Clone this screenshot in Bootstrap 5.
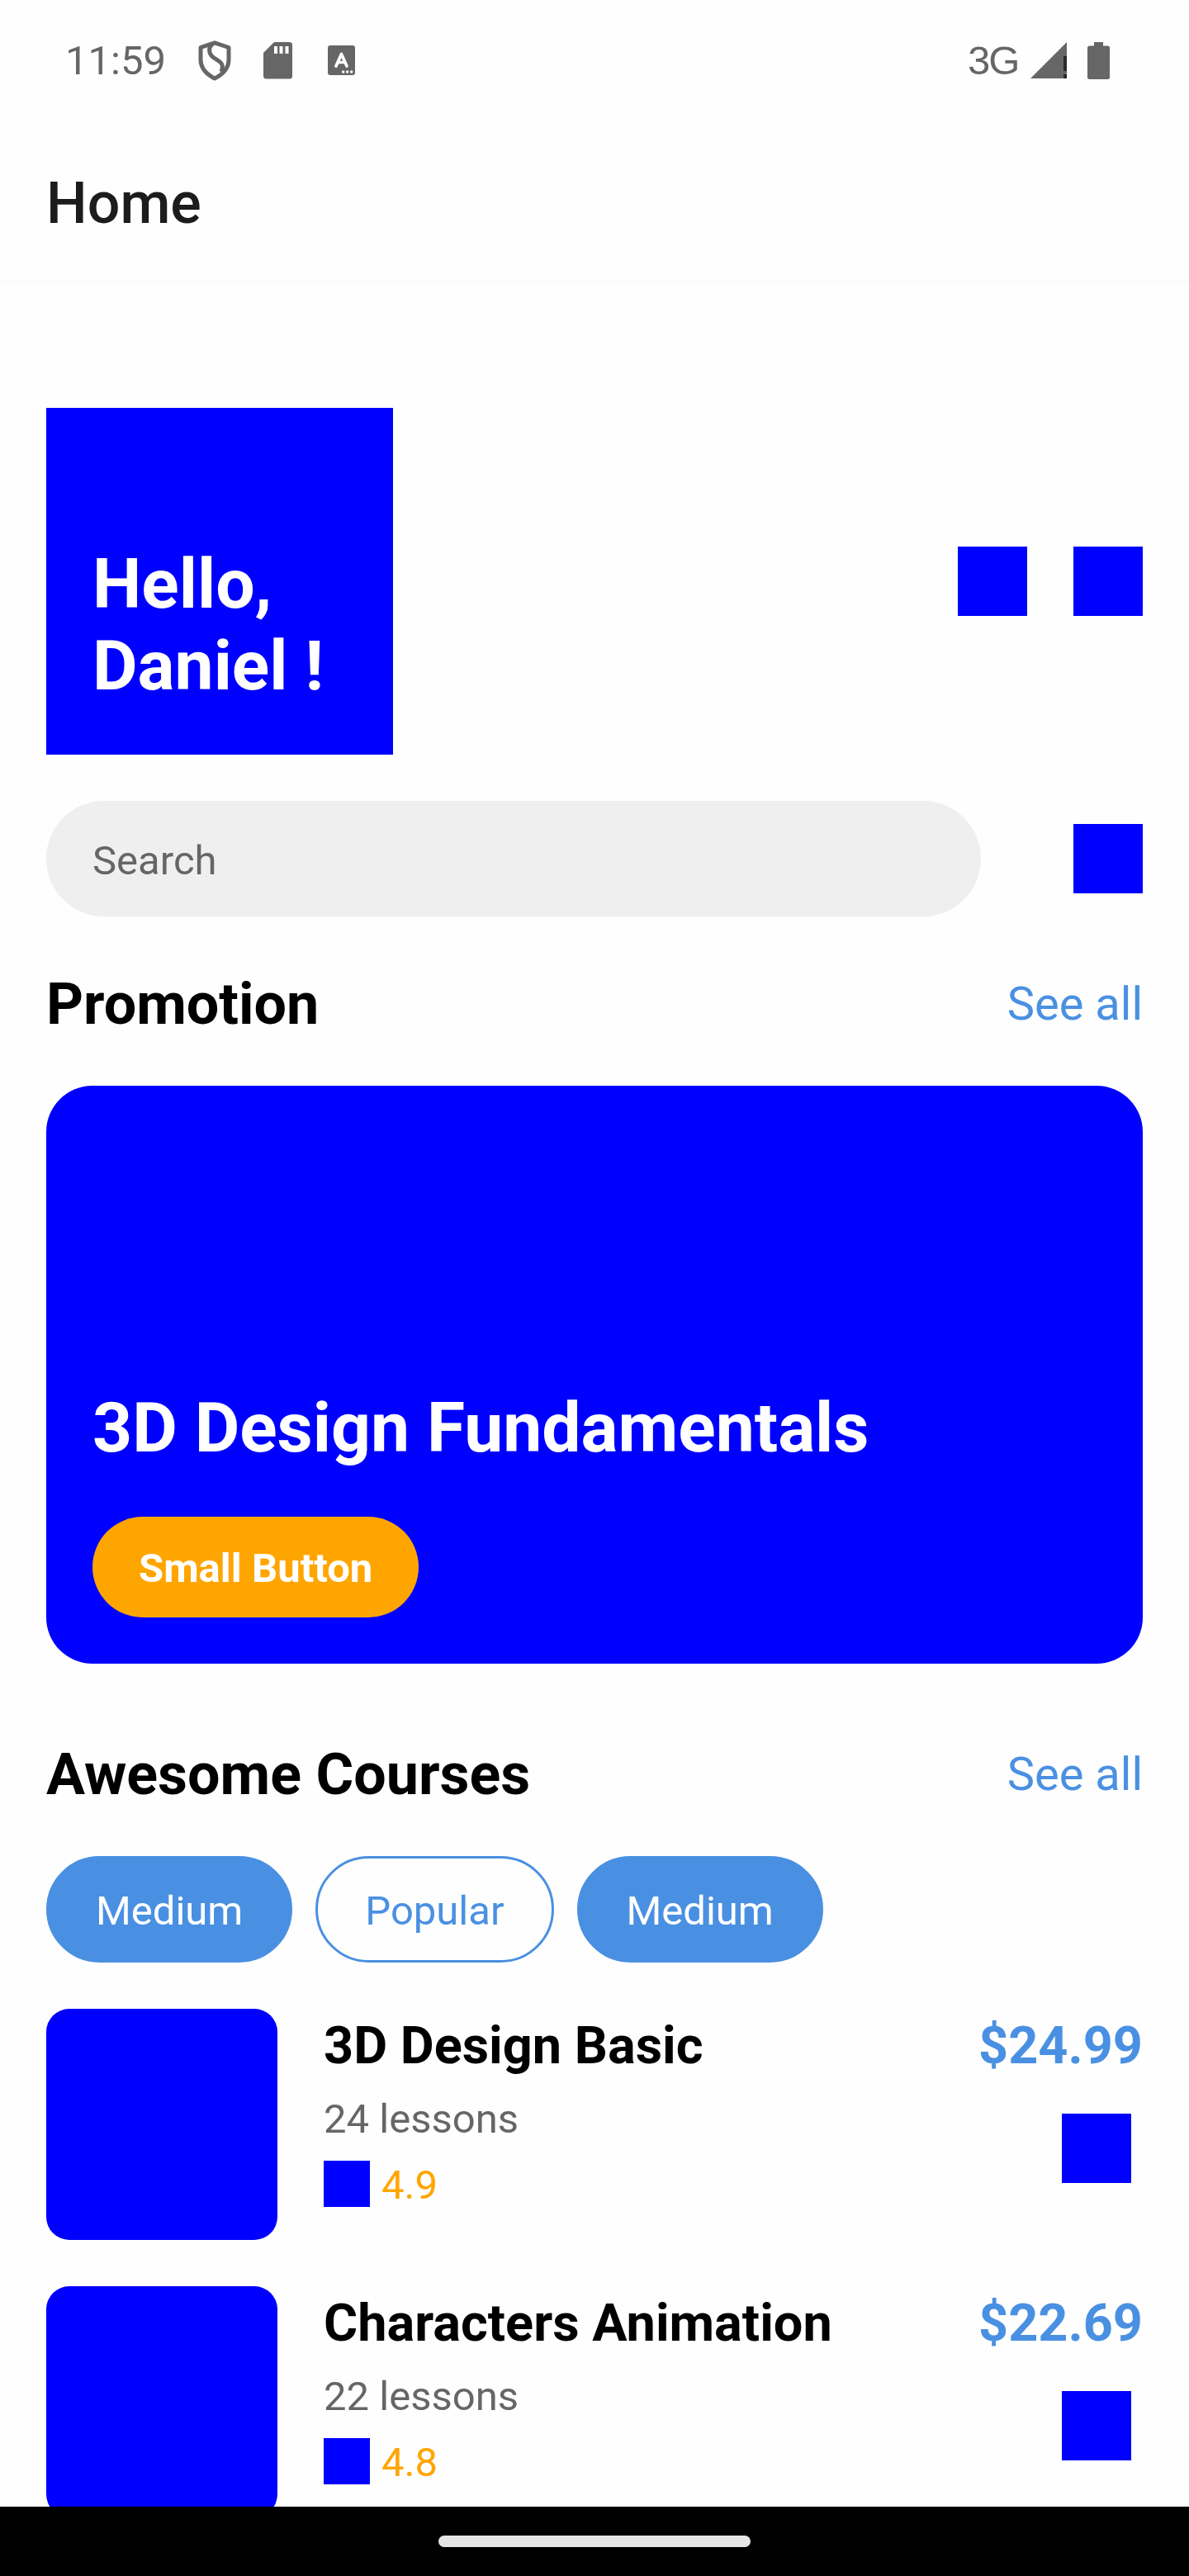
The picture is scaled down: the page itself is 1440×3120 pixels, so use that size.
<!DOCTYPE html>
<html lang="en">
<head>
<meta charset="utf-8">
<meta name="viewport" content="width=device-width, initial-scale=1">
<title>Home</title>
<link href="https://cdn.jsdelivr.net/npm/bootstrap@5.3.0/dist/css/bootstrap.min.css" rel="stylesheet">
<style>
body{font-family:Roboto,"Liberation Sans",sans-serif;background:#fefefe;color:#000;font-size:49px;line-height:58px}
.screen{width:1440px;height:3120px}
.status{height:146px;padding:0 96px 0 79px;color:#666;flex:none}
.status svg{display:block;flex:none}
.clock{width:161px;padding-top:2px}
.network{font-family:"Liberation Sans",sans-serif;font-size:49px;width:77px;letter-spacing:-2px;padding-left:1px}
.ic-sd{margin-left:39px}
.ic-a{margin-left:42px}
.ic-bat{margin-left:24px}
.appbar{height:194px;padding:2px 56px 0;flex:none}
.appbar h1{font-size:70px;line-height:82px;font-weight:500;color:#1c1c1e;margin-top:57px}
.feed{border-top:3px solid #fbfbfb;padding:151px 56px 0;min-height:0;flex:1 1 0}
.blue{background:#00f}
.hello{width:420px;height:420px;padding:56px;padding-bottom:58px;margin:0}
.big{font-size:84px;line-height:99px;font-weight:700;color:#fff}
.sq{width:84px;height:84px;flex:none}
.sq-sm{width:56px;height:56px;flex:none}
.gap-a{gap:56px}
.searchrow{margin-top:56px}
.search,.search:focus{width:1132px;height:140px;background:#efefef;padding:5px 56px 0;font-size:49px;line-height:58px;color:#666;border:0}
.search::placeholder{color:#666;opacity:1}
.head{height:82px;margin-bottom:58px}
.head-promo{margin-top:65px}
.head-courses{margin-top:93px}
.head h2{font-size:70px;line-height:82px;font-weight:700}
.head a{font-size:56px;line-height:66px}
.tint{color:#4a90e2}
.promo{height:700px;border-radius:56px;padding:56px}
.btn-small{background:#ffa500;color:#fff;font-weight:700;font-size:49px;line-height:58px;height:122px;padding:34px 56px 30px;border:0;margin-top:58px}
.chips{gap:28px;margin-bottom:56px}
.chip{font-size:49px;line-height:58px;height:129px;padding:34.5px 57px 29.5px;border:3.5px solid #4a90e2;color:#4a90e2}
.chip.on,.chip.on:hover{background:#4a90e2;color:#fff;border-color:#4a90e2}
.course{margin-bottom:56px;height:280px}
.thumb{width:280px;height:280px;border-radius:28px;flex:none}
.course h3{font-size:63px;line-height:74px;font-weight:700;margin:8px 0 23px}
.muted{color:#666}
.rate{margin-top:18px;gap:14px;color:#ffa500}
.rate span{padding-top:4px}
.price{font-size:63px;line-height:74px;font-weight:700;margin:8px 0 45px}
.more{margin-right:14px}
.sysnav{height:84px;background:#000;flex:none}
.sysnav div{width:378px;height:14px;border-radius:7px;background:#e6e6e6}
</style>
</head>
<body>
<div class="screen d-flex flex-column overflow-hidden">
  <header class="status d-flex align-items-center">
    <span class="clock">11:59</span>
    <svg width="40" height="49" viewBox="0 0 40 49" fill="none" stroke="#666" stroke-width="5" stroke-linejoin="round"><path d="M20 2.800 37 8.500V23C37 33 30 41 20 46 10 41 3 33 3 23V8.500Z"/><path d="M18 4C12 8 12 16 19 21 27 26 32 28 28 38"/></svg>
    <svg class="ic-sd" width="36" height="45" viewBox="0 0 36 45"><path fill="#666" d="M13 0H31.500Q35 0 35 3.500V41Q35 44.500 31.500 44.500H3.500Q0 44.500 0 41V13Z"/><path fill="#fff" d="M13 5h4v9h-4zM19.500 5h4v9h-4zM26.500 5h4v9h-4z"/></svg>
    <svg class="ic-a" width="33" height="36" viewBox="0 0 33 36"><rect width="33" height="36" rx="3" fill="#666"/><path d="M10 25 16.500 10.500 23 25M12.500 20.500H20.500" fill="none" stroke="#fff" stroke-width="3.700" stroke-linecap="round" stroke-linejoin="round"/><g fill="#fff"><circle cx="18.700" cy="32" r="1.700"/><circle cx="23.700" cy="32" r="1.700"/><circle cx="28.700" cy="32" r="1.700"/></g></svg>
    <span class="network ms-auto">3G</span>
    <svg width="45" height="44" viewBox="0 0 45 44"><path fill="#666" d="M44 0V44H0Z"/><path fill="#292929" d="M40 17h4v18h-4zM40 39h4v5h-4z"/></svg>
    <svg class="ic-bat" width="27" height="45" viewBox="0 0 27 45"><path fill="#666" d="M8 0H19V4.500H24.500Q27 4.500 27 7V42.500Q27 45 24.500 45H2.500Q0 45 0 42.500V7Q0 4.500 2.500 4.500H8Z"/></svg>
  </header>
  <nav class="appbar"><h1>Home</h1></nav>
  <main class="feed overflow-hidden">
    <div class="d-flex align-items-center justify-content-between">
      <div class="hello blue big d-flex flex-column justify-content-end"><span>Hello,</span><span>Daniel !</span></div>
      <div class="d-flex gap-a"><div class="sq blue"></div><div class="sq blue"></div></div>
    </div>
    <div class="searchrow d-flex align-items-center justify-content-between">
      <input class="search form-control rounded-pill" type="text" placeholder="Search" aria-label="Search">
      <div class="sq blue"></div>
    </div>
    <div class="head head-promo d-flex align-items-center justify-content-between">
      <h2 class="m-0">Promotion</h2><a class="tint text-decoration-none" href="#">See all</a>
    </div>
    <section class="promo blue d-flex flex-column justify-content-end align-items-start">
      <div class="big">3D Design Fundamentals</div>
      <button class="btn btn-small rounded-pill">Small Button</button>
    </section>
    <div class="head head-courses d-flex align-items-center justify-content-between">
      <h2 class="m-0">Awesome Courses</h2><a class="tint text-decoration-none" href="#">See all</a>
    </div>
    <div class="chips d-flex">
      <button class="btn chip on rounded-pill">Medium</button>
      <button class="btn chip rounded-pill">Popular</button>
      <button class="btn chip on rounded-pill">Medium</button>
    </div>
    <article class="course d-flex gap-a">
      <div class="thumb blue"></div>
      <div class="flex-grow-1">
        <h3>3D Design Basic</h3>
        <div class="muted">24 lessons</div>
        <div class="rate d-flex align-items-center"><div class="sq-sm blue"></div><span>4.9</span></div>
      </div>
      <div class="d-flex flex-column align-items-end">
        <div class="price tint">$24.99</div>
        <div class="sq blue more"></div>
      </div>
    </article>
    <article class="course d-flex gap-a">
      <div class="thumb blue"></div>
      <div class="flex-grow-1">
        <h3>Characters Animation</h3>
        <div class="muted">22 lessons</div>
        <div class="rate d-flex align-items-center"><div class="sq-sm blue"></div><span>4.8</span></div>
      </div>
      <div class="d-flex flex-column align-items-end">
        <div class="price tint">$22.69</div>
        <div class="sq blue more"></div>
      </div>
    </article>
  </main>
  <footer class="sysnav d-flex align-items-center justify-content-center"><div></div></footer>
</div>
<script src="https://cdn.jsdelivr.net/npm/bootstrap@5.3.0/dist/js/bootstrap.bundle.min.js"></script>
</body>
</html>
